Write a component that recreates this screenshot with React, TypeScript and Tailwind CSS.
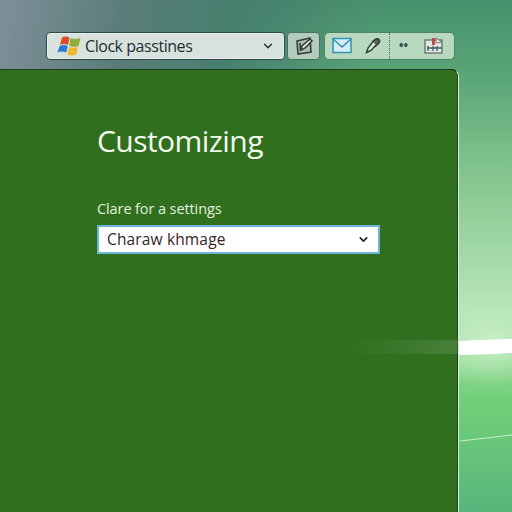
import React from 'react';
import { ChevronDown } from 'lucide-react';

function WindowsFlag() {
  return (
    <svg width="24" height="20" viewBox="0 0 24 20" className="shrink-0">
      <path d="M5 1.500 C7.500 0 10 0 12.500 1.500 L11 9 C8.500 7.700 5.500 7.700 3 9 Z" fill="#e04a28" />
      <path d="M13.500 2 C16.500 3.300 19.500 3.300 23.500 2 L21.500 10 C18.500 11 15.500 11 12.200 9.800 Z" fill="#8fae3a" />
      <path d="M2.700 10 C5.500 8.800 8 8.800 10.700 10 L9.300 16.500 C6.500 15.200 3.500 15.200 0.500 16.500 Z" fill="#2478d8" />
      <path d="M12 11 C15 12 18 12 21 11 L19.300 18.500 C16 19.700 13 19.700 10.300 18.500 Z" fill="#f2b632" />
    </svg>
  );
}

function NoteIcon() {
  return (
    <svg width="22" height="22" viewBox="0 0 22 22" fill="none" stroke="#33403c" strokeWidth="1.600">
      <path d="M4 6 L17 3 L18 17 L5 19 Z" fill="#aebfb4" />
      <path d="M8 15 L9 11 L17 4 L19 6 L12 13 Z" fill="#e6ece6" />
      <path d="M7 8 L7.500 16" />
    </svg>
  );
}

function MailIcon() {
  return (
    <svg width="20" height="17" viewBox="0 0 20 17" fill="none">
      <rect x="1" y="1.500" width="18" height="14" fill="#d6eef2" stroke="#2d92b4" strokeWidth="1.500" />
      <path d="M1 2 L10 10 L19 2" stroke="#2d92b4" strokeWidth="1.500" />
    </svg>
  );
}

function PenIcon() {
  return (
    <svg width="18" height="18" viewBox="0 0 18 18" fill="none" stroke="#2e3d38" strokeWidth="1.500">
      <path d="M9 4 L12 2 C14 1 16.500 3 15.500 5 L13 8 L10 10 Z" fill="#55645c" />
      <path d="M9 4.500 L4 11 L2.500 15.500 L7 13.500 L12 8" fill="#dce8dd" />
    </svg>
  );
}

function TableIcon() {
  return (
    <svg width="20" height="18" viewBox="0 0 20 18" fill="none">
      <rect x="1" y="3" width="17" height="13" fill="#dfe6e0" stroke="#59645f" strokeWidth="1.200" />
      <rect x="8" y="1" width="3" height="7" fill="#c2464e" />
      <path d="M12 1 L18 5 L12 6 Z" fill="#e8ece8" stroke="#59645f" strokeWidth="0.800" />
      <path d="M4 9 V14 M9 9 V14 M13 9 V14 M3 11 H18" stroke="#3d5f66" strokeWidth="1.300" />
    </svg>
  );
}

export default function App() {
  return (
    <div className="relative w-[512px] h-[512px] overflow-hidden bg-[linear-gradient(180deg,#47906c_0%,#5aa678_15%,#86c68f_35%,#b6e6b6_60%,#72d078_78%,#58b67c_100%)] font-['Open_Sans',sans-serif]">
      {/* wallpaper */}
      <div className="absolute inset-x-0 top-0 h-[90px] bg-[linear-gradient(100deg,#7f8f9a_0%,#5a7d78_24%,#47806f_45%,rgba(71,128,111,0)_72%)]" />
      <svg className="absolute inset-0" width="512" height="512" viewBox="0 0 512 512" fill="none">
        <defs>
          <radialGradient id="glow">
            <stop offset="0" stopColor="#f4fff0" stopOpacity="0.550" />
            <stop offset="1" stopColor="#f4fff0" stopOpacity="0" />
          </radialGradient>
        </defs>
        <ellipse cx="490" cy="345" rx="70" ry="42" fill="url(#glow)" />
        <path d="M460 441 L512 435" stroke="#c8eec4" strokeWidth="1.200" />
        <path d="M459 341 C480 340 500 339 512 339 L512 353 C495 354 475 355 459 355 Z" fill="#fff" />
      </svg>

      <div className="relative flex flex-col h-full">
        {/* toolbar */}
        <div className="flex items-center pl-[46px] pt-[31px] h-[60px]">
          <div className="flex items-center w-[239px] h-[28px] pl-[10px] pr-[9px] rounded-[4px] border border-[#2f4a4c] bg-[#d8e2dd] shadow-[inset_0_0_0_1px_rgba(255,255,255,0.4)]">
            <WindowsFlag />
            <span className="ml-[4px] flex-1 text-[16px] leading-none text-[#1f2c33] tracking-[-0.45px]">Clock passtines</span>
            <ChevronDown size={14} strokeWidth={2.500} className="text-[#26333a]" />
          </div>
          <div className="flex items-center justify-center w-[33px] h-[28px] ml-[2px] rounded-[4px] border border-[#48725f] bg-[#b3ccbb]">
            <NoteIcon />
          </div>
          <div className="flex items-center w-[131px] h-[28px] ml-[4px] pl-[7px] rounded-[5px] border border-[#4c8566] bg-[#b9d9bf]">
            <MailIcon />
            <span className="ml-[12px]"><PenIcon /></span>
            <div className="ml-[7px] h-full border-l border-dotted border-[#4c6d5c]" />
            <span className="ml-[9px] text-[12px] leading-none font-bold text-[#33504a]">••</span>
            <span className="ml-[16px]"><TableIcon /></span>
          </div>
        </div>

        {/* panel */}
        <div className="relative mt-[9px] flex-1 w-[459px] rounded-tr-[7px] border-t border-r border-t-[#1f3d22] border-r-[#e0f0d8] bg-[#2f6f1e] shadow-[inset_-1px_0_0_#1f3d22] pl-[97px] pt-[50px]">
          <h1 className="text-[30px] leading-[42px] font-normal text-[#f3f8ee] tracking-[-0.55px]">Customizing</h1>
          <label className="block mt-[37px] text-[14.500px] leading-[20px] text-[#e4efdc] tracking-[-0.1px]">Clare for a settings</label>
          <div className="flex items-center mt-[6px] w-[283px] h-[29px] pl-[8px] pr-[8px] border-2 border-[#6fb5d6] bg-white">
            <span className="flex-1 text-[15.500px] leading-none text-[#35251f] tracking-[0.15px]">Charaw khmage</span>
            <ChevronDown size={13} strokeWidth={3} className="text-[#222]" />
          </div>
          {/* the wallpaper streak showing through the glass */}
          <div className="absolute right-0 top-[270px] w-[110px] h-[14px] bg-[linear-gradient(90deg,rgba(255,255,255,0),rgba(255,255,255,0.12))]" />
        </div>
      </div>
    </div>
  );
}
